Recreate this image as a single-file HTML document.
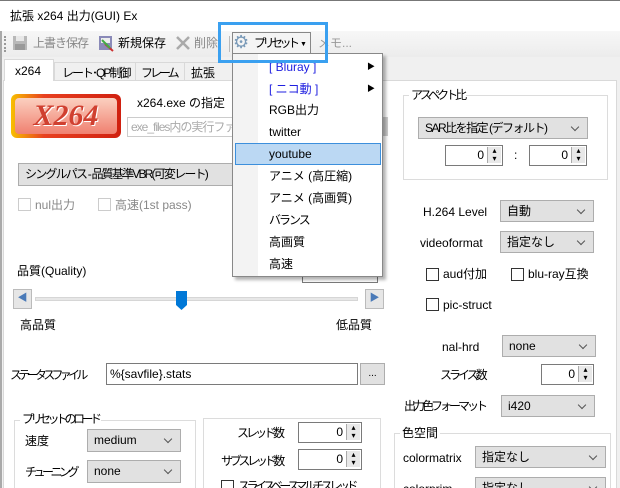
<!DOCTYPE html>
<html style="overflow:hidden;width:620px;height:488px"><head><meta charset="utf-8"><style>
*{box-sizing:border-box;margin:0;padding:0}
body{width:620px;height:488px;overflow:hidden;background:#f0f0f0;font-family:"Liberation Sans","Noto Sans CJK JP",sans-serif;font-size:12px;color:#000;position:relative}
.a{position:absolute;white-space:nowrap;line-height:14px}
.k{letter-spacing:-3px}
.m{letter-spacing:-1.5px}
.cb{position:absolute;background:#e1e1e1;border:1px solid #adadad;padding:3px 0 0 6px;line-height:14px;white-space:nowrap;overflow:hidden}
.cb::after{content:"";position:absolute;right:9px;top:6px;width:5px;height:5px;border-right:1px solid #555;border-bottom:1px solid #555;transform:rotate(45deg)}
.sp{position:absolute;background:#fff;border:1px solid #7a7a7a;text-align:right;padding:2px 18px 0 0;line-height:14px}
.sp::after{content:"▴\A▾";white-space:pre;position:absolute;right:1px;top:1px;width:13px;height:16px;font-size:8px;line-height:8px;text-align:center;background:#e8e8e8;border-left:1px solid #aaa}
.ck{position:absolute;width:13px;height:13px;border:1px solid #333;background:#fff}
.ck.d{border-color:#ccc}
.gb{position:absolute;border:1px solid #dcdcdc}
.gl{position:absolute;background:#fff;padding:0 2px;line-height:14px;white-space:nowrap}
.mi{position:absolute;left:36px;line-height:14px;white-space:nowrap}
</style></head><body>
<div style="position:absolute;left:0;top:0;width:620px;height:1px;background:#777"></div>
<div style="position:absolute;left:0;top:1px;width:620px;height:30px;background:#fff"></div>
<div class="a" style="left:10px;top:9px">拡張 x264 出力(GUI) Ex</div>
<div style="position:absolute;left:0;top:31px;width:620px;height:26px;background:linear-gradient(#f7f7f7,#ececec)"></div>
<div style="position:absolute;left:4px;top:36px;width:2px;height:16px;border-left:2px dotted #999"></div>
<svg style="position:absolute;left:12px;top:35px" width="16" height="16"><rect x="1" y="1" width="14" height="14" fill="#b8b8b8"/><rect x="4" y="1" width="8" height="5" fill="#e8e8e8"/><rect x="3" y="9" width="10" height="6" fill="#999"/></svg>
<div class="a" style="left:33px;top:36px;color:#888;letter-spacing:-1px">上書き保存</div>
<svg style="position:absolute;left:98px;top:35px" width="17" height="17"><rect x="1" y="1" width="13" height="14" fill="#8a8ab8"/><rect x="3" y="3" width="9" height="5" fill="#eee"/><path d="M7 9 L15 16" stroke="#c33" stroke-width="2"/><path d="M4 5 L12 13" stroke="#4a4" stroke-width="2"/></svg>
<div class="a" style="left:118px;top:36px">新規保存</div>
<svg style="position:absolute;left:175px;top:35px" width="16" height="16"><path d="M2 2L14 14M14 2L2 14" stroke="#aaa" stroke-width="2.5"/></svg>
<div class="a" style="left:194px;top:36px;color:#888">削除</div>
<div style="position:absolute;left:229px;top:36px;width:1px;height:16px;background:#bbb"></div>
<div style="position:absolute;left:232px;top:32px;width:79px;height:22px;border:1px solid #888;border-bottom:none;background:#f4f4f4"></div>
<div class="a" style="left:233px;top:33px;font-size:18px;color:#7a9ab8;line-height:18px">⚙</div>
<div class="a k" style="left:254px;top:36px;letter-spacing:-3.5px">プリセット</div>
<div class="a" style="left:300px;top:38px;font-size:7px">▼</div>
<div class="a" style="left:318px;top:36px;color:#999">メモ...</div>
<!-- tabs -->
<div style="position:absolute;left:3px;top:80px;width:614px;height:420px;background:#fff;border:1px solid #d9d9d9"></div>
<div style="position:absolute;left:4px;top:59px;width:50px;height:22px;background:#fff;border:1px solid #d9d9d9;border-bottom:none"></div>
<div class="a" style="left:15px;top:64px">x264</div>
<div style="position:absolute;left:54px;top:62px;width:180px;height:18px;border:1px solid #d9d9d9;border-bottom:none"></div>
<div style="position:absolute;left:135px;top:62px;width:1px;height:18px;background:#d9d9d9"></div>
<div style="position:absolute;left:184px;top:62px;width:1px;height:18px;background:#d9d9d9"></div>
<div class="a" style="left:62px;top:66px;letter-spacing:-2px">レート･QP制御</div>
<div class="a k" style="left:141px;top:66px">フレーム</div>
<div class="a" style="left:191px;top:66px">拡張</div>
<!-- logo -->
<div style="position:absolute;left:11px;top:94px;width:110px;height:44px;border-radius:6px;background:linear-gradient(90deg,#f8c000,#e84020 30%,#d02010);padding:4px"><div style="width:100%;height:100%;border-radius:4px;background:linear-gradient(#fbd0c0,#f08070);font:italic bold 30px 'Liberation Serif',serif;color:#d04030;text-align:center;line-height:36px;text-shadow:1px 1px 0 #fff">X264</div></div>
<div class="a" style="left:137px;top:96px">x264.exe の指定</div>
<div style="position:absolute;left:127px;top:117px;width:120px;height:20px;border:1px solid #ccc;background:#fff;color:#aaa;padding:2px 3px;line-height:14px;white-space:nowrap;overflow:hidden;letter-spacing:-1px">exe_files内の実行ファイル</div>
<div style="position:absolute;left:383px;top:117px;width:5px;height:19px;background:#ccc"></div>
<div class="cb" style="left:18px;top:163px;width:365px;height:23px;letter-spacing:-1.8px">シングルパス - 品質基準VBR(可変レート)</div>
<div class="ck d" style="left:18px;top:198px"></div><div class="a" style="left:35px;top:198px;color:#888">nul出力</div>
<div class="ck d" style="left:98px;top:198px"></div><div class="a" style="left:115px;top:198px;color:#888">高速(1st pass)</div>
<div class="a" style="left:17px;top:264px">品質(Quality)</div>
<div style="position:absolute;left:302px;top:262px;width:76px;height:21px;border:1px solid #7a7a7a;background:#fff"></div>
<div style="position:absolute;left:13px;top:289px;width:19px;height:20px;background:#e6e6e6;border:1px solid #bbb;color:#4a7ab8;font-size:10px;text-align:center;line-height:18px">◀</div>
<div style="position:absolute;left:35px;top:297px;width:323px;height:4px;background:#e7e7e7;border:1px solid #d6d6d6"></div>
<svg style="position:absolute;left:176px;top:291px" width="12" height="19"><path d="M0 0H11V14L5.5 19L0 14Z" fill="#0078d7"/></svg>
<div style="position:absolute;left:365px;top:289px;width:19px;height:20px;background:#e6e6e6;border:1px solid #bbb;color:#4a7ab8;font-size:10px;text-align:center;line-height:18px">▶</div>
<div class="a" style="left:20px;top:318px">高品質</div>
<div class="a" style="left:336px;top:318px">低品質</div>
<div class="a" style="left:10px;top:368px;letter-spacing:-3.7px">ステータスファイル</div>
<div style="position:absolute;left:106px;top:363px;width:252px;height:22px;border:1px solid #7a7a7a;background:#fff;padding:3px 3px;line-height:14px">%{savfile}.stats</div>
<div style="position:absolute;left:360px;top:363px;width:25px;height:22px;border:1px solid #adadad;background:#e1e1e1;text-align:center;line-height:20px;font-size:10px">...</div>
<div class="gb" style="left:14px;top:420px;width:182px;height:80px"></div>
<div class="gl" style="left:20px;top:412px;letter-spacing:-3.5px">プリセットのロード</div>
<div class="a" style="left:25px;top:434px">速度</div>
<div class="cb" style="left:87px;top:429px;width:94px;height:23px">medium</div>
<div class="a" style="left:25px;top:465px;letter-spacing:-3.5px">チューニング</div>
<div class="cb" style="left:87px;top:460px;width:94px;height:23px">none</div>
<div class="gb" style="left:203px;top:418px;width:178px;height:80px"></div>
<div class="a" style="left:237px;top:426px;letter-spacing:-3px">スレッド数</div>
<div class="sp" style="left:298px;top:422px;width:64px;height:21px">0</div>
<div class="a" style="left:221px;top:454px;letter-spacing:-3.3px">サブスレッド数</div>
<div class="sp" style="left:298px;top:449px;width:64px;height:21px">0</div>
<div class="ck" style="left:221px;top:480px"></div><div class="a" style="left:238px;top:479px;letter-spacing:-3.5px">スライスベースマルチスレッド</div>
<!-- right -->
<div class="gb" style="left:403px;top:95px;width:205px;height:85px"></div>
<div class="gl" style="left:409px;top:88px;letter-spacing:-3px">アスペクト比</div>
<div class="cb" style="left:418px;top:117px;width:170px;height:22px;letter-spacing:-1.5px">SAR比を指定 (デフォルト)</div>
<div class="sp" style="left:445px;top:145px;width:58px;height:21px">0</div>
<div class="a" style="left:514px;top:148px">:</div>
<div class="sp" style="left:529px;top:145px;width:58px;height:21px">0</div>
<div class="a" style="left:423px;top:205px">H.264 Level</div>
<div class="cb" style="left:500px;top:200px;width:94px;height:22px">自動</div>
<div class="a" style="left:420px;top:236px">videoformat</div>
<div class="cb" style="left:500px;top:231px;width:94px;height:22px">指定なし</div>
<div class="ck" style="left:426px;top:268px"></div><div class="a" style="left:443px;top:267px">aud付加</div>
<div class="ck" style="left:511px;top:268px"></div><div class="a" style="left:528px;top:267px">blu-ray互換</div>
<div class="ck" style="left:426px;top:298px"></div><div class="a" style="left:443px;top:298px">pic-struct</div>
<div class="a" style="left:442px;top:340px">nal-hrd</div>
<div class="cb" style="left:502px;top:335px;width:94px;height:22px">none</div>
<div class="a" style="left:440px;top:368px;letter-spacing:-3px">スライス数</div>
<div class="sp" style="left:541px;top:364px;width:53px;height:21px">0</div>
<div class="a" style="left:404px;top:399px;letter-spacing:-3px">出力色フォーマット</div>
<div class="cb" style="left:501px;top:395px;width:94px;height:22px">i420</div>
<div class="gb" style="left:394px;top:433px;width:217px;height:70px"></div>
<div class="gl" style="left:400px;top:426px">色空間</div>
<div class="a" style="left:403px;top:451px">colormatrix</div>
<div class="cb" style="left:475px;top:446px;width:131px;height:22px">指定なし</div>
<div class="a" style="left:403px;top:482px">colorprim</div>
<div class="cb" style="left:475px;top:477px;width:131px;height:22px">指定なし</div>
<!-- menu -->
<div style="position:absolute;left:232px;top:53px;width:151px;height:224px;background:#fff;border:1px solid #888;box-shadow:3px 3px 3px rgba(0,0,0,.3)">
<div style="position:absolute;left:0;top:0;width:25px;height:100%;background:#f3f3f3"></div>
<div class="mi" style="top:6px;color:#2020e0">[ Bluray ]</div><div class="a" style="left:134px;top:6px;font-size:8px">▶</div>
<div class="mi" style="top:28px;color:#2020e0">[ ニコ動 ]</div><div class="a" style="left:134px;top:28px;font-size:8px">▶</div>
<div class="mi" style="top:49px">RGB出力</div>
<div class="mi" style="top:71px">twitter</div>
<div style="position:absolute;left:2px;top:89px;width:146px;height:22px;background:#bbd8f3;border:1px solid #3c8fdc"></div>
<div class="mi" style="top:93px">youtube</div>
<div class="mi" style="top:115px">アニメ (高圧縮)</div>
<div class="mi" style="top:137px">アニメ (高画質)</div>
<div class="mi" style="top:159px;letter-spacing:-2px">バランス</div>
<div class="mi" style="top:181px">高画質</div>
<div class="mi" style="top:203px">高速</div>
</div>
<div style="position:absolute;left:218px;top:22px;width:110px;height:41px;border:3px solid #3aa0f0"></div>
<div style="position:absolute;left:0;top:31px;width:2px;height:457px;background:#aaa"></div>
</body></html>
